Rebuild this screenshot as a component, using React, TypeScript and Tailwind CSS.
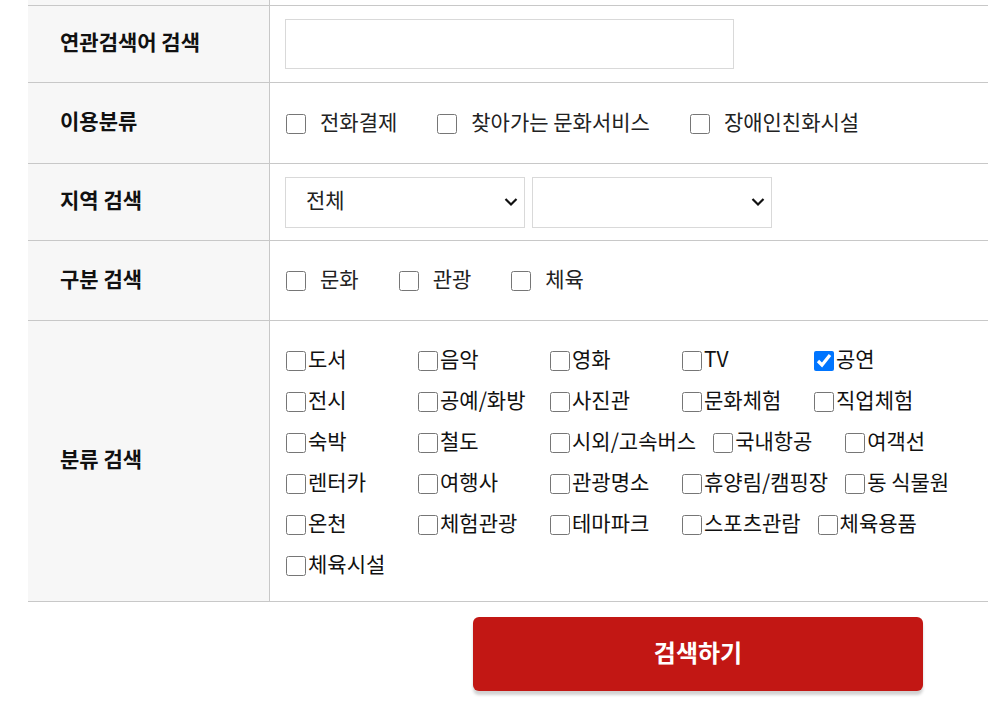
import React from "react";

const font = { fontFamily: '"Noto Sans CJK KR", "Noto Sans", sans-serif' };

const usageOptions = ["전화결제", "찾아가는 문화서비스", "장애인친화시설"];
const typeOptions = ["문화", "관광", "체육"];
const categories = [
  "도서", "음악", "영화", "TV", "공연",
  "전시", "공예/화방", "사진관", "문화체험", "직업체험",
  "숙박", "철도", "시외/고속버스", "국내항공", "여객선",
  "렌터카", "여행사", "관광명소", "휴양림/캠핑장", "동 식물원",
  "온천", "체험관광", "테마파크", "스포츠관람", "체육용품",
  "체육시설",
];

function Chevron() {
  return (
    <svg
      width="14"
      height="9"
      viewBox="0 0 14 9"
      className="pointer-events-none absolute right-[7px] top-1/2 -translate-y-1/2"
    >
      <path d="M1.5 1.5 L7 7 L12.5 1.5" fill="none" stroke="#111" strokeWidth="2.2" />
    </svg>
  );
}

function Row({ label, height, children }: { label: string; height: string; children: React.ReactNode }) {
  return (
    <div className={`flex border-b border-[#c8c8c8] ${height}`}>
      <div className="w-[242px] shrink-0 border-r border-[#c8c8c8] bg-[#f7f7f7] flex items-center pl-[32px] text-[21px] font-bold text-[#111] leading-none">
        <span className="pb-[5px]">{label}</span>
      </div>
      <div className="flex-1 flex items-center pl-[15px]">{children}</div>
    </div>
  );
}

function InlineCheck({ label }: { label: string }) {
  return (
    <label className="inline-flex items-center mr-[39px] text-[21px] leading-none text-[#222]">
      <input type="checkbox" className="w-5 h-5 m-0 ml-px mr-[14px]" />
      <span className="pb-[5px]">{label}</span>
    </label>
  );
}

export default function App() {
  return (
    <div style={font} className="w-full min-h-[711px] bg-white overflow-hidden">
      <div className="ml-[28px] w-[960px]">
        {/* previous row stub */}
        <div className="flex h-[6px] border-b border-[#c8c8c8]">
          <div className="w-[242px] border-r border-[#c8c8c8] bg-[#f7f7f7]" />
        </div>

        <Row label="연관검색어 검색" height="h-[77px]">
          <input
            type="text"
            className="w-[449px] h-[50px] border border-[#d9d9d9] px-3 text-[21px] focus:outline-none"
          />
        </Row>

        <Row label="이용분류" height="h-[81px]">
          <div className="flex items-center pt-[2px]">
            {usageOptions.map((o) => (
              <InlineCheck key={o} label={o} />
            ))}
          </div>
        </Row>

        <Row label="지역 검색" height="h-[77px]">
          <div className="flex gap-[7px]">
            <div className="relative">
              <select className="appearance-none w-[240px] h-[51px] border border-[#d9d9d9] bg-white pl-[20px] pb-[4px] text-[21px] text-[#222] focus:outline-none">
                <option>전체</option>
              </select>
              <Chevron />
            </div>
            <div className="relative">
              <select className="appearance-none w-[240px] h-[51px] border border-[#d9d9d9] bg-white pl-[20px] text-[21px] text-[#222] focus:outline-none">
                <option></option>
              </select>
              <Chevron />
            </div>
          </div>
        </Row>

        <Row label="구분 검색" height="h-[80px]">
          <div className="flex items-center">
            {typeOptions.map((o) => (
              <InlineCheck key={o} label={o} />
            ))}
          </div>
        </Row>

        <div className="flex border-b border-[#c8c8c8] h-[281px]">
          <div className="w-[242px] shrink-0 border-r border-[#c8c8c8] bg-[#f7f7f7] flex items-center pl-[32px] text-[21px] font-bold text-[#111] leading-none">
            <span className="pb-[5px]">분류 검색</span>
          </div>
          <div className="flex-1 pl-[15px] pt-[19px]">
            <div className="flex flex-wrap w-[700px]">
              {categories.map((c) => (
                <label
                  key={c}
                  className="inline-flex items-center h-[41px] min-w-[116px] mr-[16px] text-[21px] leading-none text-[#111] whitespace-nowrap"
                >
                  <input
                    type="checkbox"
                    defaultChecked={c === "공연"}
                    className="w-5 h-5 m-0 ml-px mr-[2px]"
                  />
                  <span className="pb-[5px]">{c}</span>
                </label>
              ))}
            </div>
          </div>
        </div>

        {/* Search */}
        <div className="pt-[15px] pl-[445px]">
          <button
            type="button"
            className="w-[450px] h-[74px] rounded-[6px] bg-[#c21714] pb-[5px] text-[24px] leading-none font-bold text-white shadow-[0_4px_3px_rgba(0,0,0,0.18)]"
          >
            검색하기
          </button>
        </div>
      </div>
    </div>
  );
}
